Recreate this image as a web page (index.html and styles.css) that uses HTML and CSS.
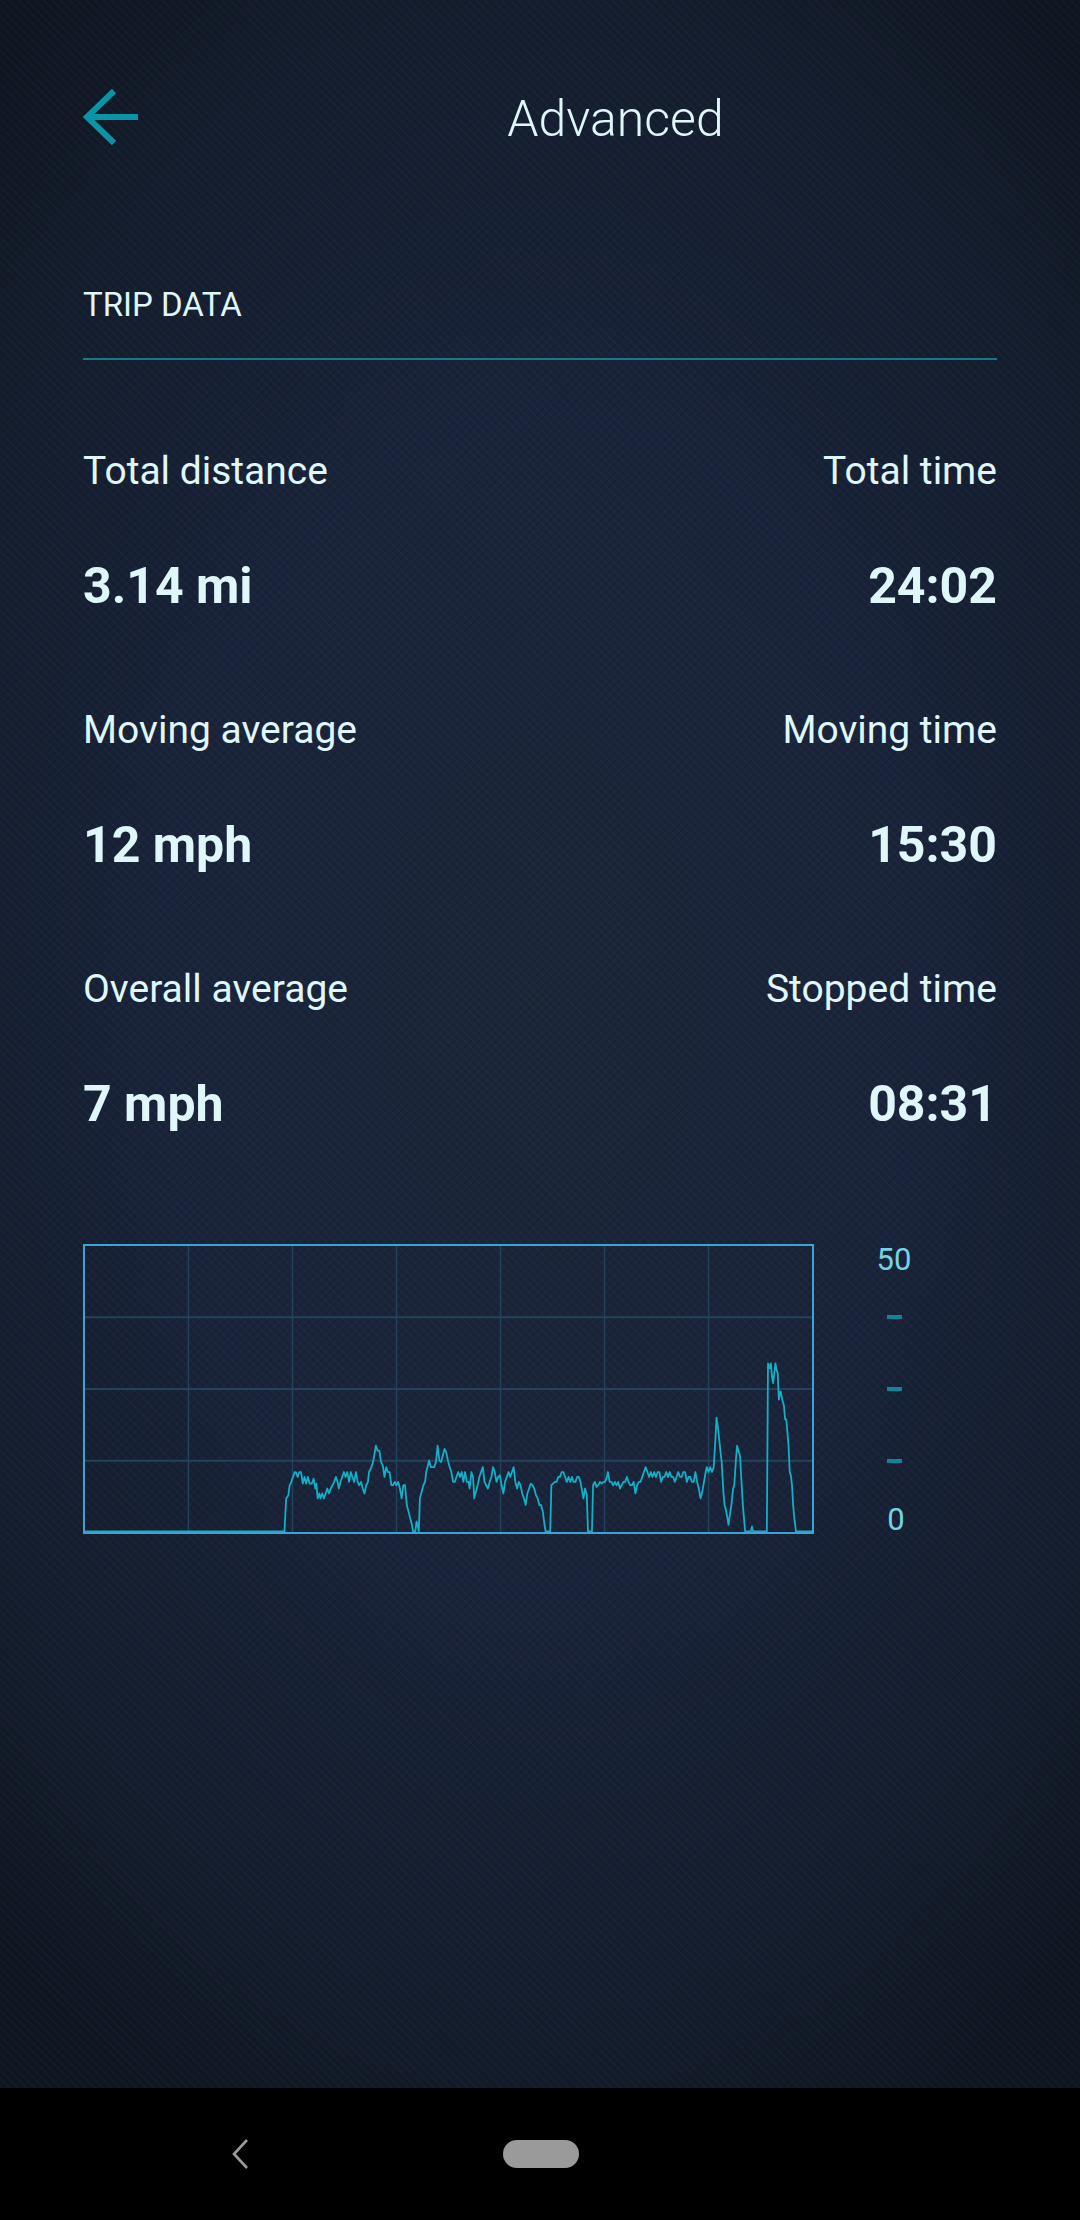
FILE: index.html
```html
<!DOCTYPE html>
<html lang="en">
<head>
<meta charset="utf-8">
<title>Advanced</title>
<link rel="stylesheet" href="styles.css">
</head>
<body>
<div class="screen">
  <main class="main">
    <header class="toolbar">
      <svg class="back" width="56" height="56" viewBox="0 0 56 56" aria-hidden="true">
        <polyline points="31,2 4,28 31,54" fill="none" stroke="#0a95a6" stroke-width="6"/>
        <line x1="4" y1="28" x2="55" y2="28" stroke="#0a95a6" stroke-width="6"/>
      </svg>
      <h1 class="title">Advanced</h1>
    </header>

    <h2 class="section-title">TRIP DATA</h2>
    <div class="divider"></div>

    <section class="stats">
      <div class="stat">
        <div class="stat-label">Total distance</div>
        <div class="stat-value">3.14 mi</div>
      </div>
      <div class="stat right">
        <div class="stat-label">Total time</div>
        <div class="stat-value">24:02</div>
      </div>
      <div class="stat">
        <div class="stat-label">Moving average</div>
        <div class="stat-value">12 mph</div>
      </div>
      <div class="stat right">
        <div class="stat-label">Moving time</div>
        <div class="stat-value">15:30</div>
      </div>
      <div class="stat">
        <div class="stat-label">Overall average</div>
        <div class="stat-value">7 mph</div>
      </div>
      <div class="stat right">
        <div class="stat-label">Stopped time</div>
        <div class="stat-value">08:31</div>
      </div>
    </section>

    <section class="chart-row">
      <div class="chart">
        <svg width="727" height="286" viewBox="41 74 1272 868" preserveAspectRatio="none" aria-hidden="true">
          <g stroke="#23425b" stroke-width="1.5" vector-effect="non-scaling-stroke">
            <line x1="222" y1="60" x2="222" y2="960" vector-effect="non-scaling-stroke"/>
            <line x1="404" y1="60" x2="404" y2="960" vector-effect="non-scaling-stroke"/>
            <line x1="586" y1="60" x2="586" y2="960" vector-effect="non-scaling-stroke"/>
            <line x1="768" y1="60" x2="768" y2="960" vector-effect="non-scaling-stroke"/>
            <line x1="950" y1="60" x2="950" y2="960" vector-effect="non-scaling-stroke"/>
            <line x1="1132" y1="60" x2="1132" y2="960" vector-effect="non-scaling-stroke"/>
            <line x1="30" y1="290" x2="1330" y2="290" stroke-width="2" vector-effect="non-scaling-stroke"/>
            <line x1="30" y1="508" x2="1330" y2="508" stroke-width="2" vector-effect="non-scaling-stroke"/>
            <line x1="30" y1="726" x2="1330" y2="726" stroke-width="2" vector-effect="non-scaling-stroke"/>
          </g>
          <polyline fill="none" stroke="#12afc7" stroke-width="1.8" stroke-linejoin="round" vector-effect="non-scaling-stroke"
            points="40,940 390,940 393,840 395,835 397,830 399,800 401,795 405,775 408,760 410,760 413,775 416,760 419,760 422,795 425,775 428,795 431,775 434,795 438,795 441,780 444,810 446,795 448,840 451,825 453,840 456,825 459,840 462,825 465,810 468,825 471,810 474,800 477,790 480,775 483,790 485,810 488,790 491,775 494,760 497,775 500,760 503,790 506,760 509,775 512,790 515,760 518,790 521,800 524,790 527,810 530,825 533,800 536,790 538,760 541,750 545,730 548,700 550,680 553,695 556,695 559,730 562,740 565,775 568,745 571,760 574,760 577,800 580,800 583,790 586,800 589,790 592,810 595,840 598,800 601,800 604,860 607,880 610,900 613,920 615,940 619,940 621,910 623,920 625,940 627,840 630,820 633,800 636,790 638,760 641,740 643,725 646,745 649,745 652,745 655,730 658,680 661,725 664,730 667,710 670,690 673,700 676,725 679,745 682,760 685,790 688,790 691,775 694,760 697,775 700,760 703,790 706,760 709,790 712,790 714,810 717,760 720,775 722,840 725,820 728,800 731,775 734,760 737,745 740,790 743,800 746,810 749,790 752,775 755,745 758,760 761,790 764,775 767,770 770,800 773,825 776,790 779,775 782,760 785,775 788,760 791,745 794,790 797,810 800,790 803,800 806,825 809,840 812,860 815,825 818,810 821,795 824,800 827,810 830,830 833,840 836,860 839,860 842,880 845,920 847,940 855,940 857,800 860,795 863,790 866,790 869,775 872,775 875,760 878,760 881,775 884,790 887,775 890,790 893,775 896,790 899,790 902,775 905,775 908,790 911,820 913,840 916,810 919,830 921,940 928,940 930,800 933,790 936,805 939,800 942,790 945,795 948,790 951,790 954,775 956,760 959,790 962,790 965,800 968,790 971,800 974,790 977,810 980,800 983,790 986,790 989,775 992,790 995,800 998,800 1001,790 1004,825 1007,800 1010,790 1013,790 1016,775 1019,760 1022,745 1025,760 1028,775 1031,760 1034,775 1037,760 1040,775 1043,760 1046,760 1049,790 1052,775 1055,775 1058,760 1061,775 1064,760 1067,775 1070,775 1073,790 1076,775 1079,760 1082,775 1085,775 1088,760 1091,760 1094,790 1097,775 1100,775 1103,790 1106,790 1109,760 1112,790 1115,810 1118,840 1121,820 1124,790 1127,760 1129,745 1132,760 1135,745 1138,760 1141,745 1144,660 1146,595 1148,620 1150,650 1153,700 1155,730 1158,820 1160,860 1163,880 1165,900 1167,920 1170,880 1172,860 1175,810 1177,800 1180,720 1182,680 1185,700 1187,710 1190,800 1192,860 1194,900 1196,940 1206,940 1208,925 1210,940 1234,940 1236,430 1239,445 1241,430 1243,470 1245,490 1247,460 1249,430 1251,450 1253,460 1255,540 1258,515 1261,540 1264,560 1266,600 1268,600 1270,640 1272,680 1274,760 1276,770 1278,800 1280,860 1282,900 1285,940 1314,940"/>
        </svg>
      </div>
      <div class="axis">
        <span class="axis-label">50</span>
        <span class="tick first"></span>
        <span class="tick"></span>
        <span class="tick"></span>
        <span class="axis-label last">0</span>
      </div>
    </section>
  </main>

  <nav class="navbar">
    <svg class="nav-back" width="18" height="30" viewBox="0 0 18 30" aria-hidden="true">
      <polyline points="16,1 3,15 16,29" fill="none" stroke="#9a9a9a" stroke-width="2.6"/>
    </svg>
    <span class="home-pill"></span>
  </nav>
</div>
</body>
</html>
```

FILE: styles.css
```css
html, body {
  margin: 0;
  padding: 0;
  background: #000;
}

.screen {
  width: 1080px;
  height: 2220px;
  display: flex;
  flex-direction: column;
  font-family: Roboto, "Noto Sans", "Liberation Sans", sans-serif;
  color: #e0f7fa;
}

.main {
  flex: 1;
  box-sizing: border-box;
  padding: 56px 83px 0 83px;
  background-color: #18223a;
  background-image:
    repeating-linear-gradient(45deg, rgba(255,255,255,0.018) 0 2px, rgba(0,0,0,0) 2px 6px),
    repeating-linear-gradient(-45deg, rgba(0,0,0,0.08) 0 2px, rgba(0,0,0,0) 2px 6px),
    radial-gradient(ellipse 75% 60% at 50% 48%, #1b2638 0%, #19233a 45%, #141d2d 80%, #0f1622 100%);
}

.toolbar {
  display: flex;
  align-items: center;
  height: 122px;
}

.back {
  flex: none;
  display: block;
}

.title {
  flex: 1;
  margin: 0;
  padding: 4px 0 0 95px;
  text-align: center;
  font-size: 50px;
  font-weight: 300;
  line-height: 61px;
  color: #e0f7fa;
}

.section-title {
  margin: 107px 0 0 0;
  font-size: 33px;
  font-weight: 400;
  line-height: 40px;
  color: #e0f7fa;
}

.divider {
  margin-top: 33px;
  height: 2px;
  background: #1a7688;
}

.stats {
  margin-top: 88px;
  display: grid;
  grid-template-columns: 1fr 1fr;
  row-gap: 92px;
}

.stat {
  display: flex;
  flex-direction: column;
  gap: 63px;
}

.stat.right {
  text-align: right;
}

.stat-label {
  font-size: 39px;
  line-height: 46px;
  font-weight: 400;
}

.stat-value {
  font-size: 50px;
  line-height: 58px;
  font-weight: 700;
}

.chart-row {
  margin-top: 111px;
  display: flex;
  align-items: flex-start;
}

.chart {
  width: 731px;
  height: 290px;
  box-sizing: border-box;
  border: 2px solid #3ba4d2;
  flex: none;
}

.chart svg {
  display: block;
}

.axis {
  margin-left: 50px;
  width: 60px;
  display: flex;
  flex-direction: column;
  align-items: center;
}

.axis-label {
  display: block;
  font-size: 31px;
  line-height: 31px;
  font-weight: 400;
  color: #74d4e4;
}

.axis-label.last {
  margin-top: 41px;
  padding-left: 4px;
}

.tick {
  display: block;
  width: 15px;
  height: 4px;
  background: #0c8796;
  margin-top: 68px;
}

.tick.first {
  margin-top: 40px;
}

.navbar {
  height: 132px;
  flex: none;
  background: #000;
  display: flex;
  align-items: center;
  padding-left: 231px;
}

.nav-back {
  display: block;
}

.home-pill {
  display: block;
  margin-left: 254px;
  width: 76px;
  height: 28px;
  border-radius: 14px;
  background: #9a9a9a;
}
```
